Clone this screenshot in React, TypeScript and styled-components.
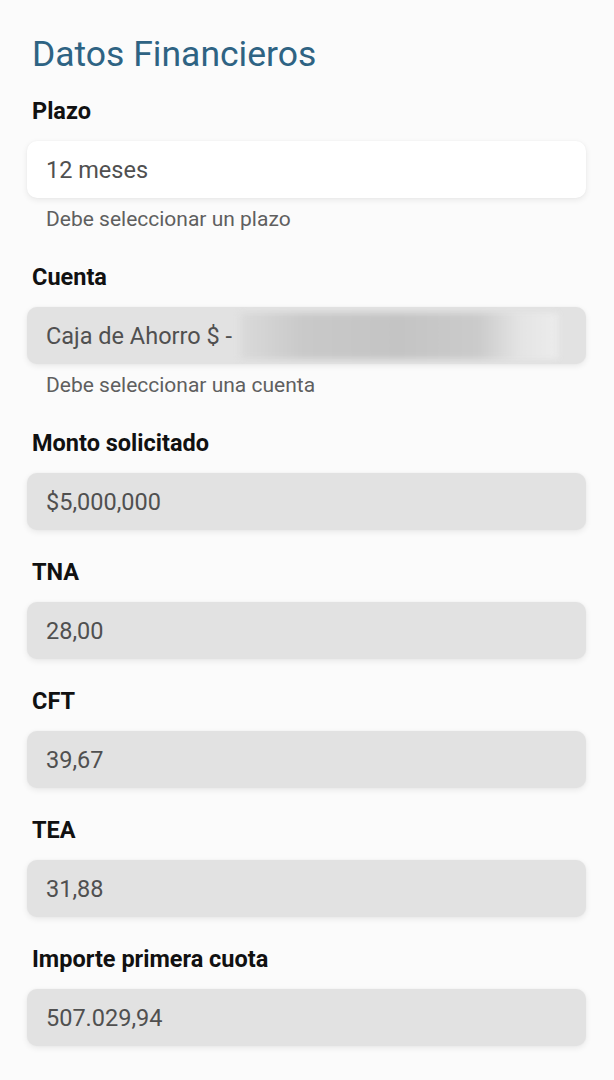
import React from "react";
import styled, { createGlobalStyle } from "styled-components";

const Global = createGlobalStyle`
  html, body { margin: 0; padding: 0; background: #fbfbfb; }
  body { font-family: Roboto, "Noto Sans", "Liberation Sans", sans-serif; -webkit-font-smoothing: antialiased; }
`;

const Page = styled.div`
  display: flex;
  flex-direction: column;
  padding: 34px 28px 35px 27px;
  background: #fbfbfb;
  min-height: 1080px;
  box-sizing: border-box;
`;

const Title = styled.h1`
  margin: 0 0 25px 5px;
  font-size: 35.5px;
  line-height: 40px;
  font-weight: 400;
  color: #2e6383;
`;

const Fields = styled.div`
  display: flex;
  flex-direction: column;
  gap: 30px;
`;

const Field = styled.div`
  display: flex;
  flex-direction: column;
`;

const Label = styled.div`
  padding-left: 5px;
  font-size: 23.5px;
  line-height: 24px;
  font-weight: 700;
  color: #111;
  margin-bottom: 18px;
`;

const Input = styled.div<{ $disabled?: boolean }>`
  display: flex;
  align-items: center;
  height: 57px;
  box-sizing: border-box;
  padding: 0 19px;
  border-radius: 10px;
  background: ${(p) => (p.$disabled ? "#e2e2e2" : "#ffffff")};
  box-shadow: 0 2px 6px rgba(0, 0, 0, 0.08), 0 0 2px rgba(0, 0, 0, 0.04);
  font-size: 23.5px;
  color: #505050;
  white-space: pre;
  overflow: hidden;
`;

const Helper = styled.div`
  padding: 10px 0 5px 19px;
  font-size: 21px;
  line-height: 22px;
  color: #5f5f5f;
`;

const Blur = styled.span`
  display: inline-block;
  flex: none;
  width: 318px;
  height: 46px;
  margin-left: 8px;
  background: linear-gradient(
    90deg,
    #dadada 0%,
    #c9c9c9 20%,
    #c4c4c4 50%,
    #cbcbcb 75%,
    #e4e4e4 88%,
    #ececec 100%
  );
  filter: blur(3px);
`;

type F = { label: string; value?: React.ReactNode; disabled?: boolean; helper?: string };

const fields: F[] = [
  { label: "Plazo", value: "12 meses", helper: "Debe seleccionar un plazo" },
  {
    label: "Cuenta",
    value: (
      <>
        {"Caja de Ahorro $ -"}
        <Blur />
      </>
    ),
    disabled: true,
    helper: "Debe seleccionar una cuenta",
  },
  { label: "Monto solicitado", value: "$5,000,000", disabled: true },
  { label: "TNA", value: "28,00", disabled: true },
  { label: "CFT", value: "39,67", disabled: true },
  { label: "TEA", value: "31,88", disabled: true },
  { label: "Importe primera cuota", value: "507.029,94", disabled: true },
];

export default function App() {
  return (
    <>
      <Global />
      <Page>
        <Title>Datos Financieros</Title>
        <Fields>
          {fields.map((f) => (
            <Field key={f.label}>
              <Label>{f.label}</Label>
              <Input $disabled={f.disabled}>{f.value}</Input>
              {f.helper && <Helper>{f.helper}</Helper>}
            </Field>
          ))}
        </Fields>
      </Page>
    </>
  );
}
